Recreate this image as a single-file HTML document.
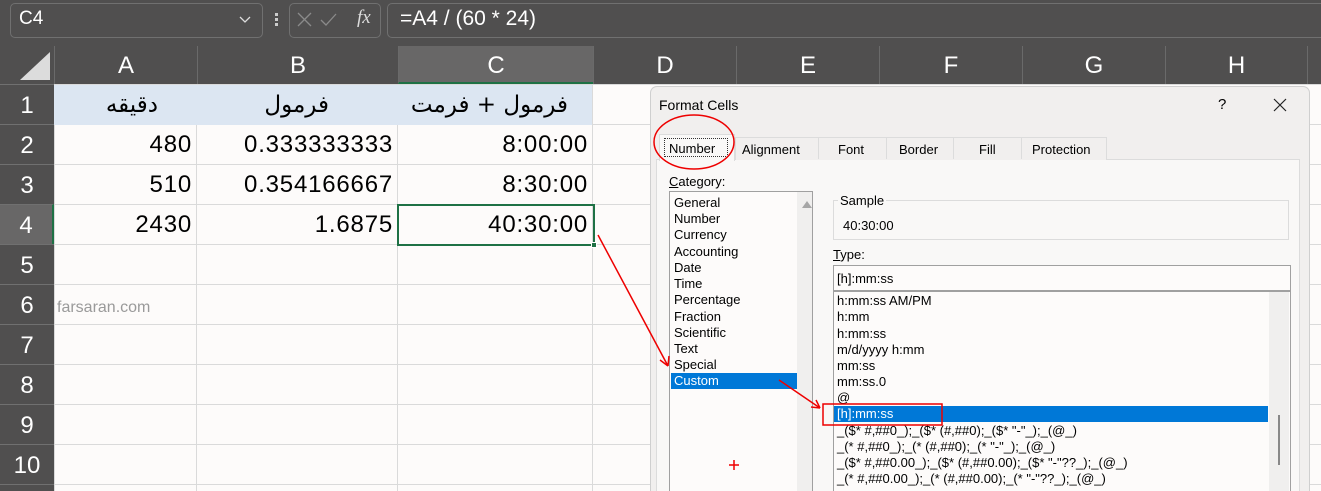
<!DOCTYPE html>
<html style="overflow:hidden;height:491px"><head><meta charset="utf-8"><style>
*{margin:0;padding:0;box-sizing:border-box}
body{width:1321px;height:491px;overflow:hidden;background:#504f4f;position:relative;font-family:"Liberation Sans","DejaVu Sans",sans-serif}
.a{position:absolute}
.box{position:absolute;border:1px solid #707070;border-radius:5px}
.ch{position:absolute;top:46px;height:38px;color:#fff;font-size:24px;text-align:center;line-height:40px;border-left:1px solid #6a6a6a}
.rh{position:absolute;left:0;width:54px;height:40px;color:#fff;font-size:24px;text-align:center;line-height:42px;border-top:1px solid #707070}
.cell{position:absolute;font-size:24px;letter-spacing:0.8px;color:#000;text-align:right;line-height:40px;padding-right:4px;font-family:"Liberation Sans","DejaVu Sans",sans-serif}
.fa{font-family:"DejaVu Sans","Noto Sans CJK SC",sans-serif;font-size:23px;letter-spacing:0}
.d{font-size:13px;color:#000;position:absolute;white-space:nowrap}
.li{position:absolute;font-size:13px;white-space:nowrap;height:16px;line-height:16px}
</style></head><body>
<div class="box" style="left:10px;top:3px;width:253px;height:35px"></div>
<div class="a" style="left:19px;top:8px;color:#fff;font-size:19px">C4</div>
<svg class="a" style="left:238px;top:14px" width="14" height="10"><path d="M2 3l5 5 5-5" stroke="#ddd" fill="none" stroke-width="1.3"/></svg>
<div class="a" style="left:275px;top:13px;width:3px;height:3px;background:#ccc;box-shadow:0 5px 0 #ccc,0 10px 0 #ccc"></div>
<div class="box" style="left:289px;top:3px;width:92px;height:35px"></div>
<svg class="a" style="left:296px;top:11px" width="50" height="18"><path d="M2 2l13 13M15 2L2 15" stroke="#8a8a8a" stroke-width="1.3"/><path d="M25 9l5 5 10-11" stroke="#8a8a8a" fill="none" stroke-width="1.3"/></svg>
<div class="a" style="left:357px;top:7px;color:#ddd;font-size:19px;font-style:italic;font-family:'Liberation Serif',serif">fx</div>
<div class="a" style="left:387px;top:3px;width:934px;height:35px;border:1px solid #707070;border-right:none;border-radius:5px 0 0 5px"></div>
<div class="a" style="left:400px;top:7px;color:#fff;font-size:21px">=A4 / (60 * 24)</div>
<svg class="a" style="left:18px;top:50px" width="34" height="32"><path d="M32 2V30H2z" fill="#dcdcdc"/></svg>
<div class="ch" style="left:54px;width:143px">A</div>
<div class="ch" style="left:197px;width:201px">B</div>
<div class="ch" style="left:398px;width:195px;background:#686767;border-bottom:2px solid #1e7145">C</div>
<div class="ch" style="left:593px;width:143px">D</div>
<div class="ch" style="left:736px;width:143px">E</div>
<div class="ch" style="left:879px;width:143px">F</div>
<div class="ch" style="left:1022px;width:143px">G</div>
<div class="ch" style="left:1165px;width:142px">H</div>
<div class="ch" style="left:1307px;width:14px"></div>
<div class="a" style="left:54px;top:84px;width:1267px;height:407px;background:#fdfbfa;
background-image:linear-gradient(#dadada 1px,transparent 1px),linear-gradient(90deg,#dadada 1px,transparent 1px);background-size:100% 40px,100% 100%"></div>
<div class="a" style="left:196px;top:84px;width:1px;height:407px;background:#dadada"></div>
<div class="a" style="left:397px;top:84px;width:1px;height:407px;background:#dadada"></div>
<div class="a" style="left:592px;top:84px;width:1px;height:407px;background:#dadada"></div>
<div class="a" style="left:54px;top:85px;width:539px;height:40px;background:#dce6f2;border-right:1px solid #dadada"></div>
<div class="rh" style="top:84px">1</div><div class="rh" style="top:124px">2</div><div class="rh" style="top:164px">3</div>
<div class="rh" style="top:204px;background:#686767;border-right:2px solid #1e7145">4</div>
<div class="rh" style="top:244px">5</div><div class="rh" style="top:284px">6</div><div class="rh" style="top:324px">7</div>
<div class="rh" style="top:364px">8</div><div class="rh" style="top:404px">9</div><div class="rh" style="top:444px">10</div>
<div class="rh" style="top:484px;height:7px"></div>
<div class="cell fa" style="left:54px;top:85px;width:108px" dir="rtl">دقيقه</div>
<div class="cell fa" style="left:197px;top:85px;width:136px" dir="rtl">فرمول</div>
<div class="cell fa" style="left:398px;top:85px;width:174px" dir="rtl">فرمول + فرمت</div>
<div class="cell" style="left:54px;top:125px;width:142px">480</div>
<div class="cell" style="left:197px;top:125px;width:200px">0.333333333</div>
<div class="cell" style="left:398px;top:125px;width:194px">8:00:00</div>
<div class="cell" style="left:54px;top:165px;width:142px">510</div>
<div class="cell" style="left:197px;top:165px;width:200px">0.354166667</div>
<div class="cell" style="left:398px;top:165px;width:194px">8:30:00</div>
<div class="cell" style="left:54px;top:205px;width:142px">2430</div>
<div class="cell" style="left:197px;top:205px;width:200px">1.6875</div>
<div class="cell" style="left:398px;top:205px;width:194px">40:30:00</div>
<div class="a" style="left:397px;top:204px;width:198px;height:42px;border:2px solid #1e7145"></div>
<div class="a" style="left:591px;top:242px;width:6px;height:6px;background:#1e7145;border:1px solid #fff"></div>
<div class="a" style="left:57px;top:299px;font-size:16px;color:#9a9a9a">farsaran.com</div>
<div class="a" style="left:650px;top:86px;width:660px;height:405px;background:#f1efee;border:1px solid #cfcfcf;border-bottom:none;border-radius:7px 7px 0 0"></div>
<div class="d" style="left:659px;top:97px;font-size:14px">Format Cells</div>
<div class="d" style="left:1218px;top:96px;font-size:15px">?</div>
<svg class="a" style="left:1273px;top:98px" width="14" height="14"><path d="M1 1l12 12M13 1L1 13" stroke="#222" stroke-width="1.2"/></svg>
<div class="a" style="left:656px;top:159px;width:644px;height:332px;background:#f9f8f7;border:1px solid #dcdcdc;border-bottom:none"></div>
<div class="a" style="left:735px;top:137px;width:372px;height:23px;border:1px solid #dcdcdc;border-bottom:none;background:#f1efee"></div>
<div class="a" style="left:818px;top:137px;width:1px;height:22px;background:#dcdcdc"></div>
<div class="a" style="left:886px;top:137px;width:1px;height:22px;background:#dcdcdc"></div>
<div class="a" style="left:953px;top:137px;width:1px;height:22px;background:#dcdcdc"></div>
<div class="a" style="left:1021px;top:137px;width:1px;height:22px;background:#dcdcdc"></div>
<div class="a" style="left:659px;top:134px;width:76px;height:27px;background:#f9f8f7;border:1px solid #dcdcdc;border-bottom:none"></div>
<div class="a" style="left:664px;top:138px;width:64px;height:19px;border:1px dotted #333"></div>
<div class="d" style="left:669px;top:141px">Number</div>
<div class="d" style="left:742px;top:142px">Alignment</div>
<div class="d" style="left:838px;top:142px">Font</div>
<div class="d" style="left:899px;top:142px">Border</div>
<div class="d" style="left:979px;top:142px">Fill</div>
<div class="d" style="left:1032px;top:142px">Protection</div>
<div class="d" style="left:669px;top:174px"><u>C</u>ategory:</div>
<div class="a" style="left:669px;top:191px;width:144px;height:300px;background:#fdfbfa;border:1px solid #a0a0a0;border-bottom:none"></div>
<div class="a" style="left:797px;top:192px;width:15px;height:299px;background:#f0efee"></div>
<svg class="a" style="left:801px;top:199px" width="12" height="10"><path d="M1 9L6 2l5 7z" fill="#a6a6a6"/></svg>
<div class="a" style="left:671px;top:373px;width:126px;height:16px;background:#0078d7"></div>
<div class="li" style="left:674px;top:195px">General</div>
<div class="li" style="left:674px;top:211px">Number</div>
<div class="li" style="left:674px;top:227px">Currency</div>
<div class="li" style="left:674px;top:244px">Accounting</div>
<div class="li" style="left:674px;top:260px">Date</div>
<div class="li" style="left:674px;top:276px">Time</div>
<div class="li" style="left:674px;top:292px">Percentage</div>
<div class="li" style="left:674px;top:309px">Fraction</div>
<div class="li" style="left:674px;top:325px">Scientific</div>
<div class="li" style="left:674px;top:341px">Text</div>
<div class="li" style="left:674px;top:357px">Special</div>
<div class="li" style="left:674px;top:373px;color:#fff">Custom</div>
<div class="a" style="left:833px;top:200px;width:456px;height:40px;border:1px solid #dcdcdc"></div>
<div class="d" style="left:838px;top:193px;background:#f9f8f7;padding:0 2px">Sample</div>
<div class="d" style="left:843px;top:218px">40:30:00</div>
<div class="d" style="left:833px;top:247px"><u>T</u>ype:</div>
<div class="a" style="left:833px;top:265px;width:458px;height:26px;background:#fdfbfa;border:1px solid #a0a0a0"></div>
<div class="d" style="left:837px;top:271px">[h]:mm:ss</div>
<div class="a" style="left:833px;top:291px;width:458px;height:200px;background:#fdfbfa;border:1px solid #a0a0a0;border-bottom:none"></div>
<div class="a" style="left:1269px;top:292px;width:20px;height:199px;background:#f0efee"></div>
<div class="a" style="left:1278px;top:415px;width:2px;height:50px;background:#888"></div>
<div class="a" style="left:834px;top:406px;width:434px;height:16px;background:#0078d7"></div>
<div class="li" style="left:837px;top:293px">h:mm:ss AM/PM</div>
<div class="li" style="left:837px;top:309px">h:mm</div>
<div class="li" style="left:837px;top:326px">h:mm:ss</div>
<div class="li" style="left:837px;top:342px">m/d/yyyy h:mm</div>
<div class="li" style="left:837px;top:358px">mm:ss</div>
<div class="li" style="left:837px;top:374px">mm:ss.0</div>
<div class="li" style="left:837px;top:390px">@</div>
<div class="li" style="left:837px;top:406px;color:#fff">[h]:mm:ss</div>
<div class="li" style="left:837px;top:423px">_($* #,##0_);_($* (#,##0);_($* "-"_);_(@_)</div>
<div class="li" style="left:837px;top:439px">_(* #,##0_);_(* (#,##0);_(* "-"_);_(@_)</div>
<div class="li" style="left:837px;top:455px">_($* #,##0.00_);_($* (#,##0.00);_($* "-"??_);_(@_)</div>
<div class="li" style="left:837px;top:471px">_(* #,##0.00_);_(* (#,##0.00);_(* "-"??_);_(@_)</div>
<svg class="a" style="left:0;top:0" width="1321" height="491">
<ellipse cx="694" cy="142" rx="40" ry="27" fill="none" stroke="#e00" stroke-width="1.5"/>
<rect x="823" y="404" width="119" height="21" fill="none" stroke="#e00" stroke-width="1.5"/>
<path d="M598 235L668 366" stroke="#e00" stroke-width="1.5"/>
<path d="M668 366l-8-6M668 366l1-10" stroke="#e00" stroke-width="1.5"/>
<path d="M779 380L820 408" stroke="#e00" stroke-width="1.5"/>
<path d="M820 408l-9-1M820 408l-4-8" stroke="#e00" stroke-width="1.5"/>
<path d="M729 465h10M734 460v10" stroke="#e00" stroke-width="1.5"/>
</svg>
</body></html>
